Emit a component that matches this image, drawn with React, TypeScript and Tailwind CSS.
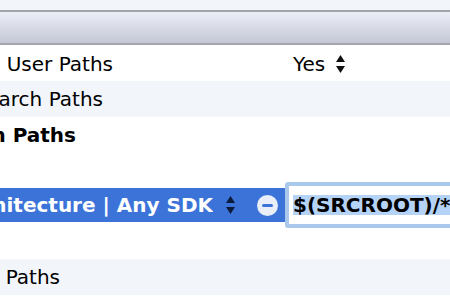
import React from 'react';

const font = { fontFamily: '"DejaVu Sans", "Lucida Grande", sans-serif' };

function Stepper({ color }: { color: string }) {
  return (
    <svg width="11" height="20" viewBox="0 0 11 20" className="shrink-0">
      <path d="M5.5 1 L10 8 L1 8 Z" fill={color} />
      <path d="M1 12 L10 12 L5.5 19 Z" fill={color} />
    </svg>
  );
}

function Label({ text, end, bold }: { text: string; end: number; bold?: boolean }) {
  return (
    <div className="flex justify-end overflow-hidden shrink-0" style={{ width: end }}>
      <span className={`whitespace-nowrap ${bold ? 'font-bold' : 'font-normal'}`}>{text}</span>
    </div>
  );
}

export default function App() {
  return (
    <div className="w-[450px] h-[300px] overflow-hidden bg-white text-[20px] text-black" style={font}>
      <div className="h-[10px] bg-[#f2f5fa]" />
      <div className="h-[2px] bg-[#a2a4a8]" />
      <div className="h-[31px] bg-gradient-to-b from-[#eceef7] to-[#c4c7d5]" />
      <div className="h-[2px] bg-[#a4a6ab]" />
      <div className="h-[1px] bg-white" />

      <div className="h-[35px] flex items-center">
        <Label text="Always Search User Paths" end={113} />
        <div className="ml-[180px] flex items-center gap-[10px]">
          <span>Yes</span>
          <Stepper color="#111" />
        </div>
      </div>
      <div className="h-[36px] flex items-center bg-[#f2f5fa]">
        <Label text="Header Search Paths" end={103} />
      </div>
      <div className="h-[35px] flex items-center">
        <Label text="Library Search Paths" end={76} bold />
      </div>
      <div className="h-[36px]" />
      <div className="h-[34px] flex items-center bg-[#3c73d9] text-white relative">
        <Label text="Any Architecture | Any SDK" end={213} bold />
        <div className="ml-[12px]">
          <Stepper color="#0b1a3a" />
        </div>
        <div className="ml-[21px] w-[21px] h-[21px] rounded-full bg-[#e9eef8] flex items-center justify-center shrink-0">
          <div className="w-[11px] h-[3px] bg-[#3c73d9] rounded-sm" />
        </div>
        <div className="absolute left-[285px] top-[-6px] w-[180px] h-[46px] rounded-[3px] bg-white border-[4px] border-[#a9c8ec] flex items-center pl-[4px] text-black">
          <span className="bg-[#b5d3f7] font-bold whitespace-nowrap leading-[20px]">$(SRCROOT)/**</span>
        </div>
      </div>
      <div className="h-[37px]" />
      <div className="h-[36px] flex items-center bg-[#f2f5fa]">
        <Label text="Search Paths" end={60} />
      </div>
    </div>
  );
}
